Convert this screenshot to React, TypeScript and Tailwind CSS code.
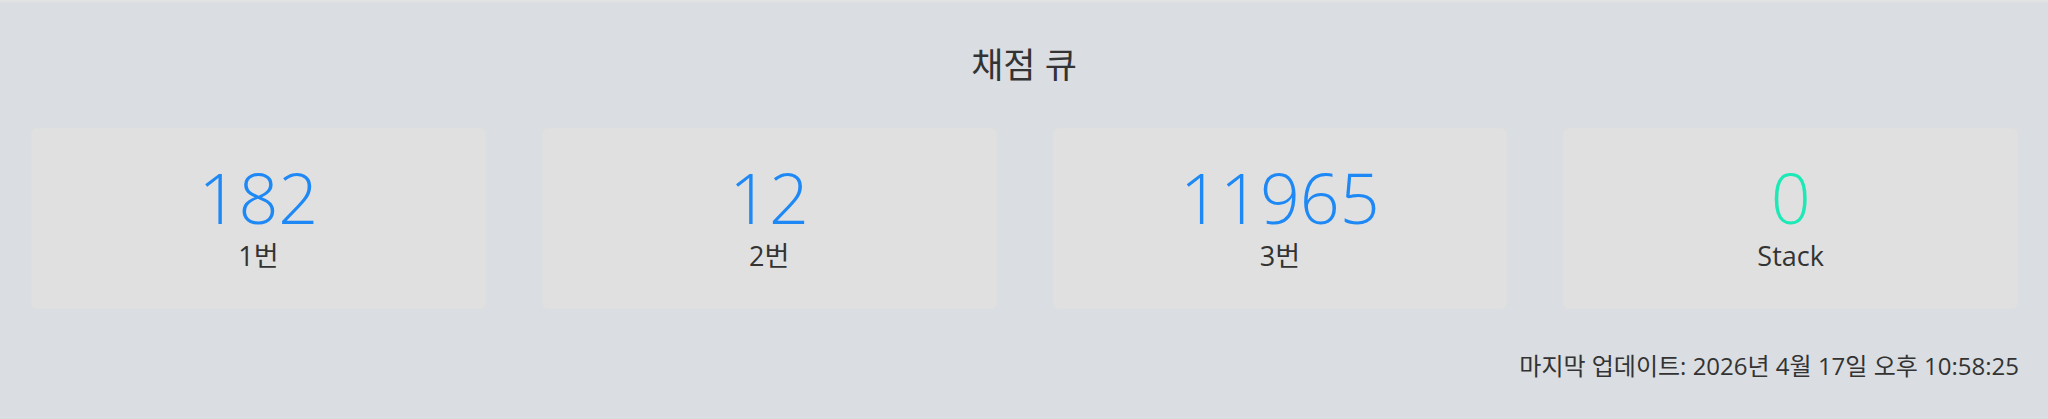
const queues = [
  { count: 182, label: '1번', tone: 'text-[#1e88f5]' },
  { count: 12, label: '2번', tone: 'text-[#1e88f5]' },
  { count: 11965, label: '3번', tone: 'text-[#1e88f5]' },
  { count: 0, label: 'Stack', tone: 'text-[#1de9b6]' },
];

export default function App() {
  return (
    <div
      className="min-h-[419px] bg-[#dadde1] text-[#333333]"
      style={{ fontFamily: '"Open Sans", "Noto Sans CJK KR", sans-serif' }}
    >
      <div className="h-[4px] bg-gradient-to-b from-[#e2e4e4] to-[#dadde1]" />

      <h1 className="pt-[41px] text-center text-[35px] leading-[40px] font-normal">채점 큐</h1>

      <section className="mt-[43px] grid grid-cols-4 gap-[56px] px-[30px] pl-[31px]">
        {queues.map((q) => (
          <div
            key={q.label}
            className="flex h-[181px] flex-col items-center justify-center rounded-[5px] border border-[#dde0de] bg-[#e0e0e0] pb-[6px]"
          >
            <div className={`text-[70px] leading-none font-light ${q.tone}`}>{q.count}</div>
            <div className="mt-[10px] text-[27px] leading-none">{q.label}</div>
          </div>
        ))}
      </section>

      <p className="mt-[41px] px-[29px] text-right text-[24px] leading-[32px]">
        마지막 업데이트: 2026년 4월 17일 오후 10:58:25
      </p>
    </div>
  );
}
